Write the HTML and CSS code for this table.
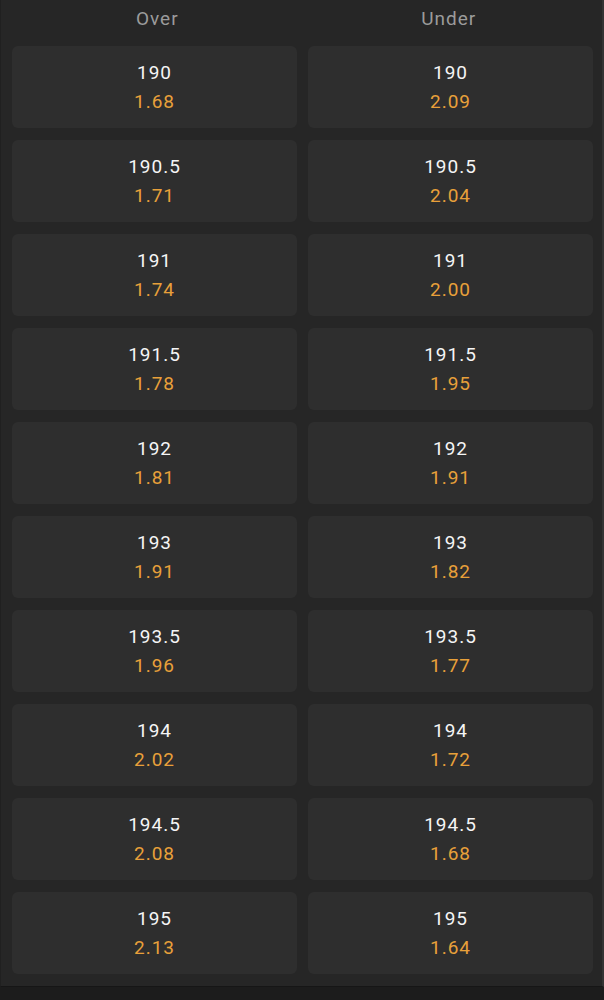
FILE: index.html
```html
<!DOCTYPE html>
<html lang="en">
<head>
<meta charset="utf-8">
<link rel="stylesheet" href="styles.css">
</head>
<body>
<div class="panel">
  <div class="head">
    <div class="col-title">Over</div>
    <div class="col-title">Under</div>
  </div>
  <div class="grid">
    <div class="card"><div class="line">190</div><div class="odd">1.68</div></div>
    <div class="card"><div class="line">190</div><div class="odd">2.09</div></div>
    <div class="card"><div class="line">190.5</div><div class="odd">1.71</div></div>
    <div class="card"><div class="line">190.5</div><div class="odd">2.04</div></div>
    <div class="card"><div class="line">191</div><div class="odd">1.74</div></div>
    <div class="card"><div class="line">191</div><div class="odd">2.00</div></div>
    <div class="card"><div class="line">191.5</div><div class="odd">1.78</div></div>
    <div class="card"><div class="line">191.5</div><div class="odd">1.95</div></div>
    <div class="card"><div class="line">192</div><div class="odd">1.81</div></div>
    <div class="card"><div class="line">192</div><div class="odd">1.91</div></div>
    <div class="card"><div class="line">193</div><div class="odd">1.91</div></div>
    <div class="card"><div class="line">193</div><div class="odd">1.82</div></div>
    <div class="card"><div class="line">193.5</div><div class="odd">1.96</div></div>
    <div class="card"><div class="line">193.5</div><div class="odd">1.77</div></div>
    <div class="card"><div class="line">194</div><div class="odd">2.02</div></div>
    <div class="card"><div class="line">194</div><div class="odd">1.72</div></div>
    <div class="card"><div class="line">194.5</div><div class="odd">2.08</div></div>
    <div class="card"><div class="line">194.5</div><div class="odd">1.68</div></div>
    <div class="card"><div class="line">195</div><div class="odd">2.13</div></div>
    <div class="card"><div class="line">195</div><div class="odd">1.64</div></div>
  </div>
</div>
</body>
</html>
```

FILE: styles.css
```css
html, body {
  margin: 0;
  padding: 0;
  background: #1c1c1c;
  font-family: Roboto, "Noto Sans", sans-serif;
}
.panel {
  width: 604px;
  box-sizing: border-box;
  background: #262626;
  border-left: 1px solid #202020;
  border-right: 2px solid #333333;
  border-bottom: 1px solid #161616;
  padding: 0 9px 12px 11px;
}
.head {
  display: grid;
  grid-template-columns: 1fr 1fr;
  column-gap: 11px;
  padding: 0 4px 0 5px;
  height: 46px;
}
.col-title {
  text-align: center;
  color: #9b9b9b;
  font-size: 19px;
  letter-spacing: 1px;
  line-height: 38px;
}
.grid {
  display: grid;
  grid-template-columns: 285px 285px;
  column-gap: 11px;
  row-gap: 12px;
}
.card {
  background: #2e2e2e;
  border-radius: 6px;
  height: 82px;
  box-sizing: border-box;
  padding-top: 12px;
  text-align: center;
  font-size: 19px;
  letter-spacing: 1px;
  line-height: 29px;
}
.line {
  color: #f5f5f5;
}
.odd {
  color: #e8a03a;
}
```
